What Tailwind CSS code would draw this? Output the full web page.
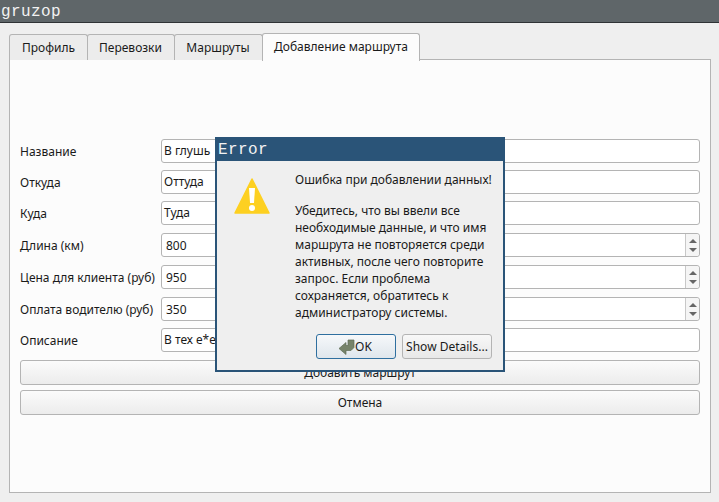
<!DOCTYPE html>
<html lang="en">
<head>
  <meta charset="UTF-8" />
  <script src="https://cdn.jsdelivr.net/npm/@tailwindcss/browser@4"></script>
  <title>gruzop</title>
</head>
<body class="bg-[#efefef] font-['Noto_Sans',sans-serif] text-[12px] text-[#1a1a1a] w-[719px] h-[502px] overflow-hidden relative">

  <!-- Window title -->
  <div class="h-[23px] bg-[#5f6669] border-b border-[#2f3335] pl-px text-[#f2f2f2] font-['Liberation_Mono',monospace] text-[16px] leading-[24px] tracking-[0.4px]">gruzop</div>

  <div class="pl-[9px] pr-[8px] pt-[10px]">
    <!-- Tabs -->
    <div class="flex items-end h-[27px] relative z-10">
      <div class="w-[79px] h-[26px] bg-[#ececec] border border-[#b4b4b4] border-b-0 rounded-t-[3px] flex items-center justify-center">Профиль</div>
      <div class="w-[88px] h-[26px] -ml-px pr-px bg-[#ececec] border border-[#b4b4b4] border-b-0 rounded-t-[3px] flex items-center justify-center">Перевозки</div>
      <div class="w-[89px] h-[26px] -ml-px pr-px bg-[#ececec] border border-[#b4b4b4] border-b-0 rounded-t-[3px] flex items-center justify-center">Маршруты</div>
      <div class="w-[158px] h-[28px] -ml-px -mb-px bg-[#fcfcfc] border border-[#b4b4b4] border-b-0 rounded-t-[3px] flex items-center justify-center pb-[2px]">Добавление маршрута</div>
    </div>

    <!-- Pane -->
    <div class="h-[434px] -mt-px bg-[#fcfcfc] border border-[#b4b4b4] px-[10px] pt-[79px]">
      <div class="grid grid-cols-[141px_1fr] items-center">
        <div class="h-[24px] leading-[26px]">Название</div>
        <div class="h-[24px] pl-[2px] leading-[22px] bg-white border border-[#b4b4b4] rounded-[3px]">В глушь</div>

        <div class="h-[24px] mt-[7px] leading-[26px]">Откуда</div>
        <div class="h-[24px] mt-[7px] pl-[2px] leading-[22px] bg-white border border-[#b4b4b4] rounded-[3px]">Оттуда</div>

        <div class="h-[24px] mt-[7px] leading-[26px]">Куда</div>
        <div class="h-[24px] mt-[7px] pl-[2px] leading-[22px] bg-white border border-[#b4b4b4] rounded-[3px]">Туда</div>

        <div class="h-[24px] mt-[8px] leading-[26px]">Длина (км)</div>
        <div class="h-[24px] mt-[8px] flex bg-white border border-[#b4b4b4] rounded-[3px]">
          <div class="flex-1 pl-[4px] leading-[23px]">800</div>
          <div class="w-[14px] border-l border-[#c8c8c8] bg-[#f5f5f5] rounded-r-[3px] flex flex-col items-center justify-center gap-[5px]">
            <svg width="8" height="4" viewBox="0 0 8 4"><path d="M4 0 8 4H0z" fill="#666"/></svg>
            <svg width="8" height="4" viewBox="0 0 8 4"><path d="M0 0h8L4 4z" fill="#666"/></svg>
          </div>
        </div>

        <div class="h-[24px] mt-[8px] leading-[26px]">Цена для клиента (руб)</div>
        <div class="h-[24px] mt-[8px] flex bg-white border border-[#b4b4b4] rounded-[3px]">
          <div class="flex-1 pl-[4px] leading-[23px]">950</div>
          <div class="w-[14px] border-l border-[#c8c8c8] bg-[#f5f5f5] rounded-r-[3px] flex flex-col items-center justify-center gap-[5px]">
            <svg width="8" height="4" viewBox="0 0 8 4"><path d="M4 0 8 4H0z" fill="#666"/></svg>
            <svg width="8" height="4" viewBox="0 0 8 4"><path d="M0 0h8L4 4z" fill="#666"/></svg>
          </div>
        </div>

        <div class="h-[24px] mt-[8px] leading-[26px]">Оплата водителю (руб)</div>
        <div class="h-[24px] mt-[8px] flex bg-white border border-[#b4b4b4] rounded-[3px]">
          <div class="flex-1 pl-[4px] leading-[23px]">350</div>
          <div class="w-[14px] border-l border-[#c8c8c8] bg-[#f5f5f5] rounded-r-[3px] flex flex-col items-center justify-center gap-[5px]">
            <svg width="8" height="4" viewBox="0 0 8 4"><path d="M4 0 8 4H0z" fill="#666"/></svg>
            <svg width="8" height="4" viewBox="0 0 8 4"><path d="M0 0h8L4 4z" fill="#666"/></svg>
          </div>
        </div>

        <div class="h-[24px] mt-[7px] leading-[26px]">Описание</div>
        <div class="h-[24px] mt-[7px] pl-[2px] leading-[22px] bg-white border border-[#b4b4b4] rounded-[3px]">В тех е*енях</div>
      </div>

      <button class="block w-full h-[25px] mt-[8px] bg-gradient-to-b from-[#fbfbfb] to-[#ececec] border border-[#b4b4b4] rounded-[3px]">Добавить маршрут</button>
      <button class="block w-full h-[25px] mt-[5px] bg-gradient-to-b from-[#fbfbfb] to-[#ececec] border border-[#b4b4b4] rounded-[3px]">Отмена</button>
    </div>
  </div>

  <!-- Error dialog -->
  <div class="absolute left-[215px] top-[137px] w-[290px] h-[235px] bg-[#efefef] border-2 border-[#2a5478] z-20">
    <div class="h-[22px] bg-[#2a5478] text-[#f2f2f2] font-['Liberation_Mono',monospace] text-[16px] leading-[22px] tracking-[0.4px] pl-px">Error</div>
    <div class="flex pl-[17px] pt-[12px]">
      <svg class="shrink-0 mt-[5px]" width="36" height="36" viewBox="0 0 36 36">
        <path d="M18 1 35 35H1z" fill="#fdd021" stroke="#fdd021" stroke-width="1.5" stroke-linejoin="round"/>
        <path d="M15 10h6l-1 15h-4z" fill="#fff"/>
        <circle cx="18" cy="30" r="3" fill="#fff"/>
      </svg>
      <div class="ml-[25px] w-[210px] leading-[17px] text-[12px]">
        <p class="mt-[-2px] whitespace-nowrap">Ошибка при добавлении данных!</p>
        <p class="mt-[14px]">Убедитесь, что вы ввели все необходимые данные, и что имя маршрута не повторяется среди активных, после чего повторите запрос. Если проблема сохраняется, обратитесь к администратору системы.</p>
      </div>
    </div>
    <div class="flex justify-end gap-[6px] pr-[11px] mt-[13px]">
      <button class="w-[80px] h-[25px] pr-[2px] bg-gradient-to-b from-[#f6f8fa] to-[#dfe6ec] border border-[#2f6f9f] rounded-[3px] flex items-center justify-center">
        <svg width="17" height="16" viewBox="0 0 17 16"><path d="M10 1H16V8.5L13 11.5H8V15.5L1 9.5 8 3.5V6.5H10Z" fill="#76836a" stroke="#5f6b54" stroke-width="0.7"/></svg>
        <span class="text-[12px]">OK</span>
      </button>
      <button class="w-[90px] h-[25px] bg-gradient-to-b from-[#f8f8f8] to-[#e8e8e8] border border-[#b4b4b4] rounded-[3px]">Show Details...</button>
    </div>
  </div>

</body>
</html>
